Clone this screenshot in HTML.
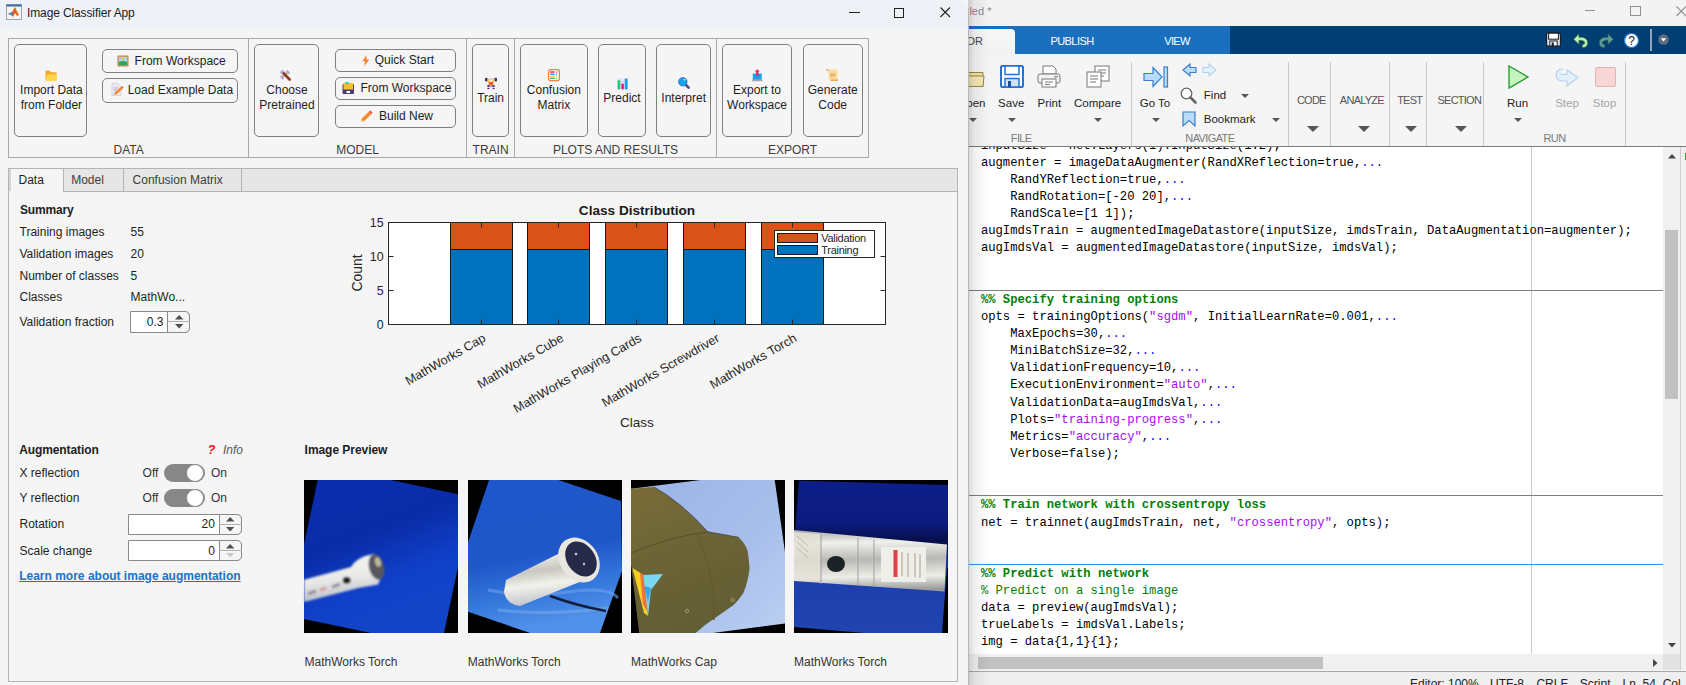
<!DOCTYPE html><html><head><meta charset="utf-8"><style>
html,body{margin:0;padding:0;width:1686px;height:685px;overflow:hidden;background:#f5f5f5;position:relative;}
.t{position:absolute;white-space:pre;}
.r{position:absolute;}
svg.r{overflow:visible;}
</style></head><body>
<div class="r" style="left:968.00px;top:0.00px;width:718.00px;height:26.00px;background:#f3f3f3;"></div>
<div class="t" style="left:969.40px;top:6.19px;font-size:11px;line-height:11px;color:#8a8a8a;font-weight:normal;font-family:'Liberation Sans', sans-serif;">led *</div>
<div class="r" style="left:1585.00px;top:10.00px;width:10.00px;height:1.00px;background:#909090;"></div>
<div class="r" style="left:1630.00px;top:5.50px;width:10.50px;height:10.00px;background:none;border:1px solid #909090;box-sizing:border-box;"></div>
<svg class="r" style="left:1676.00px;top:5.50px;" width="11" height="11" viewBox="0 0 11 11"><path d="M0.5 0.5 L10 10 M10 0.5 L0.5 10" stroke="#909090" stroke-width="1.1" fill="none"/></svg>
<div class="r" style="left:968.00px;top:26.00px;width:262.20px;height:28.20px;background:#1b6fbf;"></div>
<div class="r" style="left:1230.20px;top:26.00px;width:455.80px;height:28.20px;background:#003f73;"></div>
<div class="r" style="left:930.00px;top:29.00px;width:85.00px;height:25.20px;background:linear-gradient(#f7f7f7,#f2f2f2);border-top-right-radius:4px;"></div>
<div class="t" style="left:941.60px;top:35.69px;font-size:11px;line-height:11px;color:#444;font-weight:normal;font-family:'Liberation Sans', sans-serif;">EDITOR</div>
<div class="t" style="left:1050.40px;top:35.69px;font-size:11px;line-height:11px;color:#fff;font-weight:normal;font-family:'Liberation Sans', sans-serif;letter-spacing:-0.55px;">PUBLISH</div>
<div class="t" style="left:1164.30px;top:35.69px;font-size:11px;line-height:11px;color:#fff;font-weight:normal;font-family:'Liberation Sans', sans-serif;letter-spacing:-0.7px;">VIEW</div>
<svg class="r" style="left:1546.00px;top:32.00px;" width="15" height="15" viewBox="0 0 15 15"><path d="M1 1 L13 1 L14.4 2.4 L14.4 14 L1.6 14 L0.6 13 L0.6 1.4 Z" fill="#cfe6f8" stroke="#1a1a1a" stroke-width="1.1"/><rect x="2.6" y="1.2" width="9.8" height="6" fill="#fff" stroke="#1a1a1a" stroke-width="1"/><rect x="3.8" y="9" width="7.4" height="5" fill="#fff" stroke="#1a1a1a" stroke-width="1"/><rect x="5.6" y="10.4" width="2.2" height="3.6" fill="#1a1a1a"/></svg>
<svg class="r" style="left:1573.00px;top:33.00px;" width="16" height="15" viewBox="0 0 16 15"><path d="M0.6 6.2 L6 0.8 L6 4.2 L8.2 4.2 C12.2 4.2 14.8 6.8 14.8 10 C14.8 12.6 12.8 14.6 10.4 14.6 L9.2 14.6 L9.2 11.4 L10.2 11.4 C11 11.4 11.6 10.8 11.6 10 C11.6 8.4 10.2 7.4 8.2 7.4 L6 7.4 L6 11.6 Z" fill="#b9f1b4" stroke="#2c5e2c" stroke-width="0.7"/></svg>
<svg class="r" style="left:1597.50px;top:33.00px;" width="16" height="15" viewBox="0 0 16 15"><path d="M15.4 6.2 L10 0.8 L10 4.2 L7.8 4.2 C3.8 4.2 1.2 6.8 1.2 10 C1.2 12.6 3.2 14.6 5.6 14.6 L6.8 14.6 L6.8 11.4 L5.8 11.4 C5 11.4 4.4 10.8 4.4 10 C4.4 8.4 5.8 7.4 7.8 7.4 L10 7.4 L10 11.6 Z" fill="#5b9c98" stroke="#2c5c5a" stroke-width="0.7"/></svg>
<svg class="r" style="left:1624.00px;top:32.50px;" width="15" height="15" viewBox="0 0 15 15"><circle cx="7.5" cy="7.5" r="7" fill="#fff" stroke="#2a7fd4" stroke-width="1.2"/><text x="7.5" y="11.8" font-size="12" font-weight="normal" text-anchor="middle" font-family="Liberation Sans" fill="#111">?</text></svg>
<div class="r" style="left:1650.40px;top:29.00px;width:1.20px;height:21.50px;background:#9aa4ae;"></div>
<svg class="r" style="left:1658.00px;top:34.00px;" width="11" height="11" viewBox="0 0 11 11"><circle cx="5.5" cy="5.5" r="5.3" fill="#5e6e80"/><path d="M2.8 4.2 L8.2 4.2 L5.5 7.5 Z" fill="#fff"/></svg>
<div class="r" style="left:968.00px;top:54.20px;width:718.00px;height:91.80px;background:#f5f5f5;"></div>
<div class="r" style="left:968.00px;top:145.50px;width:718.00px;height:1.00px;background:#7c7c7c;"></div>
<div class="r" style="left:1131.00px;top:62.00px;width:1.00px;height:83.50px;background:#c9c9c9;"></div>
<div class="r" style="left:1288.00px;top:62.00px;width:1.00px;height:83.50px;background:#c9c9c9;"></div>
<div class="r" style="left:1330.10px;top:62.00px;width:1.00px;height:83.50px;background:#c9c9c9;"></div>
<div class="r" style="left:1389.00px;top:62.00px;width:1.00px;height:83.50px;background:#c9c9c9;"></div>
<div class="r" style="left:1426.00px;top:62.00px;width:1.00px;height:83.50px;background:#c9c9c9;"></div>
<div class="r" style="left:1483.30px;top:62.00px;width:1.00px;height:83.50px;background:#c9c9c9;"></div>
<div class="r" style="left:1625.10px;top:62.00px;width:1.00px;height:83.50px;background:#c9c9c9;"></div>
<svg class="r" style="left:950.00px;top:67.00px;" width="35" height="21" viewBox="0 0 35 21"><path d="M1 3 L11 3 L13 5.5 L33 5.5 L33 19.5 L1 19.5 Z" fill="#f1e4a8" stroke="#9a8740" stroke-width="1"/><path d="M1 19.5 L5 9 L34 9 L33 19.5 Z" fill="#f5e9b6" stroke="#9a8740" stroke-width="1"/></svg>
<div class="t" style="left:385.50px;width:600px;text-align:right;top:98.47px;font-size:11.5px;line-height:11.5px;color:#222;font-weight:normal;font-family:'Liberation Sans', sans-serif;">Open</div>
<svg class="r" style="left:969.00px;top:117.70px;" width="8" height="4" viewBox="0 0 8 4"><path d="M0 0 L8 0 L4.0 4 Z" fill="#555"/></svg>
<svg class="r" style="left:999.50px;top:65.00px;" width="24" height="23" viewBox="0 0 24 23"><rect x="1" y="1" width="22" height="21" rx="1.5" fill="#fff" stroke="#2a70d0" stroke-width="2"/><rect x="5" y="1" width="14" height="8.5" fill="#fff" stroke="#2a70d0" stroke-width="1.5"/><rect x="5" y="13.5" width="14" height="8.5" fill="#cfe3f8" stroke="#2a70d0" stroke-width="1.5"/><rect x="8" y="16" width="3" height="6" fill="#1a4fa0"/></svg>
<div class="t" style="left:711.20px;width:600px;text-align:center;top:98.47px;font-size:11.5px;line-height:11.5px;color:#222;font-weight:normal;font-family:'Liberation Sans', sans-serif;">Save</div>
<svg class="r" style="left:1007.50px;top:117.70px;" width="8" height="4" viewBox="0 0 8 4"><path d="M0 0 L8 0 L4.0 4 Z" fill="#555"/></svg>
<svg class="r" style="left:1037.00px;top:65.00px;" width="24" height="23" viewBox="0 0 24 23"><path d="M6 1 L16 1 L19 4 L19 9 L6 9 Z" fill="#fff" stroke="#777" stroke-width="1"/><rect x="1" y="9" width="22" height="9" rx="2" fill="#f2f2f2" stroke="#777" stroke-width="1"/><rect x="5" y="14" width="14" height="8" fill="#fff" stroke="#777" stroke-width="1"/><path d="M8 17 L16 17 M8 19.5 L13 19.5" stroke="#777" stroke-width="1"/><rect x="17" y="11" width="4" height="1.5" fill="#999"/></svg>
<div class="t" style="left:749.30px;width:600px;text-align:center;top:98.47px;font-size:11.5px;line-height:11.5px;color:#222;font-weight:normal;font-family:'Liberation Sans', sans-serif;">Print</div>
<svg class="r" style="left:1085.50px;top:65.00px;" width="25" height="23" viewBox="0 0 25 23"><rect x="9" y="1" width="14" height="15" fill="#fff" stroke="#777" stroke-width="1"/><path d="M12 5 L20 5 M12 8 L20 8 M12 11 L18 11" stroke="#777" stroke-width="1"/><rect x="1" y="7" width="14" height="15" fill="#fff" stroke="#777" stroke-width="1"/><path d="M4 11 L12 11 M4 14 L12 14 M4 17 L10 17" stroke="#777" stroke-width="1"/></svg>
<div class="t" style="left:797.60px;width:600px;text-align:center;top:98.47px;font-size:11.5px;line-height:11.5px;color:#222;font-weight:normal;font-family:'Liberation Sans', sans-serif;">Compare</div>
<svg class="r" style="left:1093.90px;top:117.70px;" width="8" height="4" viewBox="0 0 8 4"><path d="M0 0 L8 0 L4.0 4 Z" fill="#555"/></svg>
<svg class="r" style="left:1143.00px;top:66.00px;" width="26" height="22" viewBox="0 0 26 22"><path d="M1 7.5 L10 7.5 L10 1.5 L19 11 L10 20.5 L10 14.5 L1 14.5 Z" fill="#b9dcf7" stroke="#3a7fd0" stroke-width="1.2"/><rect x="21" y="1" width="3.5" height="20" fill="#b9dcf7" stroke="#3a7fd0" stroke-width="1.2"/></svg>
<div class="t" style="left:855.00px;width:600px;text-align:center;top:98.47px;font-size:11.5px;line-height:11.5px;color:#222;font-weight:normal;font-family:'Liberation Sans', sans-serif;">Go To</div>
<svg class="r" style="left:1151.80px;top:117.70px;" width="8" height="4" viewBox="0 0 8 4"><path d="M0 0 L8 0 L4.0 4 Z" fill="#555"/></svg>
<svg class="r" style="left:1182.00px;top:62.50px;" width="15" height="14" viewBox="0 0 15 14"><path d="M14 4.5 L8 4.5 L8 1 L1 7 L8 13 L8 9.5 L14 9.5 Z" fill="#b9dcf7" stroke="#3a7fd0" stroke-width="1.2"/></svg>
<svg class="r" style="left:1202.00px;top:62.50px;" width="15" height="14" viewBox="0 0 15 14"><path d="M1 4.5 L7 4.5 L7 1 L14 7 L7 13 L7 9.5 L1 9.5 Z" fill="#e4f0fb" stroke="#b5d0ec" stroke-width="1.1"/></svg>
<svg class="r" style="left:1180.00px;top:86.50px;" width="17" height="17" viewBox="0 0 17 17"><circle cx="6.5" cy="6.5" r="5.3" fill="#fff" stroke="#666" stroke-width="1.3"/><path d="M10.5 10.5 L15.5 15.5" stroke="#666" stroke-width="2.6" stroke-linecap="round"/></svg>
<div class="t" style="left:1203.80px;top:90.47px;font-size:11.5px;line-height:11.5px;color:#222;font-weight:normal;font-family:'Liberation Sans', sans-serif;">Find</div>
<svg class="r" style="left:1241.20px;top:93.90px;" width="8" height="4" viewBox="0 0 8 4"><path d="M0 0 L8 0 L4.0 4 Z" fill="#555"/></svg>
<svg class="r" style="left:1182.00px;top:111.00px;" width="14" height="16" viewBox="0 0 14 16"><path d="M1 1 L13 1 L13 15 L7 9.5 L1 15 Z" fill="#b9dcf7" stroke="#3a7fd0" stroke-width="1.2"/></svg>
<div class="t" style="left:1203.80px;top:114.27px;font-size:11.5px;line-height:11.5px;color:#222;font-weight:normal;font-family:'Liberation Sans', sans-serif;">Bookmark</div>
<svg class="r" style="left:1271.60px;top:117.70px;" width="8" height="4" viewBox="0 0 8 4"><path d="M0 0 L8 0 L4.0 4 Z" fill="#555"/></svg>
<div class="t" style="left:721.20px;width:600px;text-align:center;top:133.09px;font-size:11px;line-height:11px;color:#7a7a7a;font-weight:normal;font-family:'Liberation Sans', sans-serif;letter-spacing:-0.6px;">FILE</div>
<div class="t" style="left:909.90px;width:600px;text-align:center;top:133.09px;font-size:11px;line-height:11px;color:#7a7a7a;font-weight:normal;font-family:'Liberation Sans', sans-serif;letter-spacing:-0.6px;">NAVIGATE</div>
<div class="t" style="left:1254.50px;width:600px;text-align:center;top:133.09px;font-size:11px;line-height:11px;color:#7a7a7a;font-weight:normal;font-family:'Liberation Sans', sans-serif;letter-spacing:-0.6px;">RUN</div>
<div class="t" style="left:1011.30px;width:600px;text-align:center;top:94.59px;font-size:11px;line-height:11px;color:#555;font-weight:normal;font-family:'Liberation Sans', sans-serif;letter-spacing:-0.75px;">CODE</div>
<svg class="r" style="left:1307.00px;top:125.60px;" width="12" height="6" viewBox="0 0 12 6"><path d="M0 0 L12 0 L6.0 6 Z" fill="#555"/></svg>
<div class="t" style="left:1061.90px;width:600px;text-align:center;top:94.59px;font-size:11px;line-height:11px;color:#555;font-weight:normal;font-family:'Liberation Sans', sans-serif;letter-spacing:-0.75px;">ANALYZE</div>
<svg class="r" style="left:1357.60px;top:125.60px;" width="12" height="6" viewBox="0 0 12 6"><path d="M0 0 L12 0 L6.0 6 Z" fill="#555"/></svg>
<div class="t" style="left:1109.70px;width:600px;text-align:center;top:94.59px;font-size:11px;line-height:11px;color:#555;font-weight:normal;font-family:'Liberation Sans', sans-serif;letter-spacing:-0.75px;">TEST</div>
<svg class="r" style="left:1405.40px;top:125.60px;" width="12" height="6" viewBox="0 0 12 6"><path d="M0 0 L12 0 L6.0 6 Z" fill="#555"/></svg>
<div class="t" style="left:1159.30px;width:600px;text-align:center;top:94.59px;font-size:11px;line-height:11px;color:#555;font-weight:normal;font-family:'Liberation Sans', sans-serif;letter-spacing:-0.75px;">SECTION</div>
<svg class="r" style="left:1455.00px;top:125.60px;" width="12" height="6" viewBox="0 0 12 6"><path d="M0 0 L12 0 L6.0 6 Z" fill="#555"/></svg>
<svg class="r" style="left:1507.50px;top:65.00px;" width="21" height="24" viewBox="0 0 21 24"><path d="M1 1 L20 12 L1 23 Z" fill="#c8f2c0" stroke="#1e9a2a" stroke-width="1.3"/></svg>
<div class="t" style="left:1217.50px;width:600px;text-align:center;top:98.47px;font-size:11.5px;line-height:11.5px;color:#222;font-weight:normal;font-family:'Liberation Sans', sans-serif;">Run</div>
<svg class="r" style="left:1514.00px;top:117.70px;" width="8" height="4" viewBox="0 0 8 4"><path d="M0 0 L8 0 L4.0 4 Z" fill="#555"/></svg>
<svg class="r" style="left:1555.00px;top:66.00px;" width="24" height="22" viewBox="0 0 24 22"><path d="M8 3 C3 3 1 6 1 9 C1 13 4 15 8 15 L12 15 L12 20 L23 11.5 L12 4 L12 8.5 L8 8.5 C6.5 8.5 6 8 6 7.5" fill="#e3effa" stroke="#b9d2ee" stroke-width="1.2"/></svg>
<div class="t" style="left:1267.00px;width:600px;text-align:center;top:98.47px;font-size:11.5px;line-height:11.5px;color:#a5a5a5;font-weight:normal;font-family:'Liberation Sans', sans-serif;">Step</div>
<div class="r" style="left:1595.00px;top:67.00px;width:20.50px;height:20.00px;background:#f7d6d6;border:1px solid #e6b3b3;box-sizing:border-box;border-radius:2px;"></div>
<div class="t" style="left:1304.60px;width:600px;text-align:center;top:98.47px;font-size:11.5px;line-height:11.5px;color:#a5a5a5;font-weight:normal;font-family:'Liberation Sans', sans-serif;">Stop</div>
<div class="r" style="left:968.00px;top:146.50px;width:695.30px;height:507.20px;background:#ffffff;"></div>
<div class="r" style="left:1530.90px;top:146.50px;width:1.00px;height:507.20px;background:#c8c8c8;"></div>
<div class="r" style="left:968.00px;top:290.00px;width:695.30px;height:1.00px;background:#7f7f7f;"></div>
<div class="r" style="left:968.00px;top:495.00px;width:695.30px;height:1.00px;background:#7f7f7f;"></div>
<div class="r" style="left:968.00px;top:563.50px;width:695.30px;height:1.00px;background:#3a8ee6;"></div>
<div class="r" style="left:968px;top:146.5px;width:695.3px;height:507.2px;overflow:hidden;font-family:'Liberation Mono', monospace;color:#000;"><div class="t" style="left:12.9px;top:-6.95px;font-size:12.2px;line-height:12.2px;">inputSize = net.Layers(1).InputSize(1:2);</div><div class="t" style="left:12.9px;top:10.18px;font-size:12.2px;line-height:12.2px;">augmenter = imageDataAugmenter(RandXReflection=true,<span style="color:#0e00ff">...</span></div><div class="t" style="left:12.9px;top:27.32px;font-size:12.2px;line-height:12.2px;">    RandYReflection=true,<span style="color:#0e00ff">...</span></div><div class="t" style="left:12.9px;top:44.45px;font-size:12.2px;line-height:12.2px;">    RandRotation=[-20 20],<span style="color:#0e00ff">...</span></div><div class="t" style="left:12.9px;top:61.58px;font-size:12.2px;line-height:12.2px;">    RandScale=[1 1]);</div><div class="t" style="left:12.9px;top:78.72px;font-size:12.2px;line-height:12.2px;">augImdsTrain = augmentedImageDatastore(inputSize, imdsTrain, DataAugmentation=augmenter);</div><div class="t" style="left:12.9px;top:95.85px;font-size:12.2px;line-height:12.2px;">augImdsVal = augmentedImageDatastore(inputSize, imdsVal);</div><div class="t" style="left:12.9px;top:147.25px;font-size:12.2px;line-height:12.2px;"><span style="color:#028009;font-weight:bold">%% Specify training options</span></div><div class="t" style="left:12.9px;top:164.39px;font-size:12.2px;line-height:12.2px;">opts = trainingOptions(<span style="color:#a709f5">"sgdm"</span>, InitialLearnRate=0.001,<span style="color:#0e00ff">...</span></div><div class="t" style="left:12.9px;top:181.52px;font-size:12.2px;line-height:12.2px;">    MaxEpochs=30,<span style="color:#0e00ff">...</span></div><div class="t" style="left:12.9px;top:198.66px;font-size:12.2px;line-height:12.2px;">    MiniBatchSize=32,<span style="color:#0e00ff">...</span></div><div class="t" style="left:12.9px;top:215.79px;font-size:12.2px;line-height:12.2px;">    ValidationFrequency=10,<span style="color:#0e00ff">...</span></div><div class="t" style="left:12.9px;top:232.92px;font-size:12.2px;line-height:12.2px;">    ExecutionEnvironment=<span style="color:#a709f5">"auto"</span>,<span style="color:#0e00ff">...</span></div><div class="t" style="left:12.9px;top:250.06px;font-size:12.2px;line-height:12.2px;">    ValidationData=augImdsVal,<span style="color:#0e00ff">...</span></div><div class="t" style="left:12.9px;top:267.19px;font-size:12.2px;line-height:12.2px;">    Plots=<span style="color:#a709f5">"training-progress"</span>,<span style="color:#0e00ff">...</span></div><div class="t" style="left:12.9px;top:284.33px;font-size:12.2px;line-height:12.2px;">    Metrics=<span style="color:#a709f5">"accuracy"</span>,<span style="color:#0e00ff">...</span></div><div class="t" style="left:12.9px;top:301.46px;font-size:12.2px;line-height:12.2px;">    Verbose=false);</div><div class="t" style="left:12.9px;top:352.86px;font-size:12.2px;line-height:12.2px;"><span style="color:#028009;font-weight:bold">%% Train network with crossentropy loss</span></div><div class="t" style="left:12.9px;top:370.00px;font-size:12.2px;line-height:12.2px;">net = trainnet(augImdsTrain, net, <span style="color:#a709f5">"crossentropy"</span>, opts);</div><div class="t" style="left:12.9px;top:421.40px;font-size:12.2px;line-height:12.2px;"><span style="color:#028009;font-weight:bold">%% Predict with network</span></div><div class="t" style="left:12.9px;top:438.53px;font-size:12.2px;line-height:12.2px;"><span style="color:#028009">% Predict on a single image</span></div><div class="t" style="left:12.9px;top:455.67px;font-size:12.2px;line-height:12.2px;">data = preview(augImdsVal);</div><div class="t" style="left:12.9px;top:472.80px;font-size:12.2px;line-height:12.2px;">trueLabels = imdsVal.Labels;</div><div class="t" style="left:12.9px;top:489.93px;font-size:12.2px;line-height:12.2px;">img = data{1,1}{1};</div><div class="t" style="left:12.9px;top:507.07px;font-size:12.2px;line-height:12.2px;">scores = minibatchpredict(net, img);</div></div>
<div class="r" style="left:1663.30px;top:146.50px;width:16.70px;height:507.20px;background:#f0f0f0;"></div>
<div class="r" style="left:1665.20px;top:230.20px;width:12.80px;height:168.60px;background:#c1c1c1;"></div>
<svg class="r" style="left:1667.50px;top:154.05px;" width="8" height="4.5" viewBox="0 0 8 4.5"><path d="M0 0 L8 0 L4.0 4.5 Z" fill="#555"/></svg>
<svg class="r" style="left:1667.50px;top:154.00px;" width="8" height="4.5" viewBox="0 0 8 4.5"><path d="M0 4.5 L8 4.5 L4 0 Z" fill="#555"/></svg>
<div class="r" style="left:1663.30px;top:150.00px;width:16.70px;height:12.00px;background:#f0f0f0;"></div>
<svg class="r" style="left:1667.50px;top:154.20px;" width="8" height="4.5" viewBox="0 0 8 4.5"><path d="M0 4.5 L8 4.5 L4 0 Z" fill="#444"/></svg>
<svg class="r" style="left:1667.50px;top:642.60px;" width="8" height="4.5" viewBox="0 0 8 4.5"><path d="M0 0 L8 0 L4 4.5 Z" fill="#444"/></svg>
<div class="r" style="left:1680.00px;top:146.50px;width:1.20px;height:524.80px;background:#cfcfcf;"></div>
<div class="r" style="left:1681.20px;top:146.50px;width:4.80px;height:524.80px;background:#f0f0f0;"></div>
<div class="r" style="left:1684.50px;top:153.00px;width:1.50px;height:7.00px;background:#2aa52a;"></div>
<div class="r" style="left:968.00px;top:653.70px;width:695.30px;height:16.10px;background:#f0f0f0;"></div>
<div class="r" style="left:978.00px;top:656.50px;width:345.00px;height:12.00px;background:#c1c1c1;"></div>
<svg class="r" style="left:1653.00px;top:658.50px;" width="4.5" height="8" viewBox="0 0 4.5 8"><path d="M0 0 L4.5 4 L0 8 Z" fill="#444"/></svg>
<div class="r" style="left:1663.30px;top:653.70px;width:16.70px;height:16.30px;background:#e2e2e2;"></div>
<div class="r" style="left:968.00px;top:669.80px;width:718.00px;height:1.50px;background:#f5f5f5;"></div>
<div class="r" style="left:968.00px;top:670.80px;width:718.00px;height:1.00px;background:#a8a8a8;"></div>
<div class="r" style="left:968.00px;top:671.80px;width:718.00px;height:13.20px;background:#efefef;"></div>
<div class="t" style="left:1410.00px;top:678.34px;font-size:12px;line-height:12px;color:#222;font-weight:normal;font-family:'Liberation Sans', sans-serif;">Editor: 100%</div>
<div class="t" style="left:1490.00px;top:678.34px;font-size:12px;line-height:12px;color:#222;font-weight:normal;font-family:'Liberation Sans', sans-serif;">UTF-8</div>
<div class="t" style="left:1536.40px;top:678.34px;font-size:12px;line-height:12px;color:#222;font-weight:normal;font-family:'Liberation Sans', sans-serif;">CRLF</div>
<div class="t" style="left:1579.80px;top:678.34px;font-size:12px;line-height:12px;color:#222;font-weight:normal;font-family:'Liberation Sans', sans-serif;">Script</div>
<div class="t" style="left:1622.60px;top:678.34px;font-size:12px;line-height:12px;color:#222;font-weight:normal;font-family:'Liberation Sans', sans-serif;">Ln  54  Col  1</div>
<div class="r" style="left:968.00px;top:0.00px;width:22.00px;height:685.00px;background:linear-gradient(90deg, rgba(0,0,0,0.16), rgba(0,0,0,0.06) 30%, rgba(0,0,0,0.0));"></div>
<div class="r" style="left:0.00px;top:0.00px;width:968.00px;height:685.00px;background:#f5f5f5;border-top-right-radius:8px;"></div>
<div class="r" style="left:967.60px;top:8.00px;width:1.00px;height:677.00px;background:#b8b8b8;"></div>
<div class="r" style="left:0.00px;top:0.00px;width:968.00px;height:28.00px;background:#eef2f7;border-top-right-radius:8px;"></div>
<svg class="r" style="left:6.00px;top:4.00px;" width="16" height="16" viewBox="0 0 16 16"><rect x="0.5" y="0.5" width="15" height="15" fill="#f2f4f6" stroke="#9aa5b5" stroke-width="1"/><rect x="0.5" y="0.5" width="15" height="2" fill="#3a6ea5"/><path d="M2 10 L6 8 L9 3 L13 11 L11 12 L9 9 L7 13 L5 10 Z" fill="#e85a1a"/><path d="M2 10 L6 8 L7 12 Z" fill="#3a8ad6"/><path d="M9 3 L11 9 L13 11 Z" fill="#f6b73c"/></svg>
<div class="t" style="left:27.00px;top:7.44px;font-size:12px;line-height:12px;color:#1a1a1a;font-weight:normal;font-family:'Liberation Sans', sans-serif;letter-spacing:-0.12px;">Image Classifier App</div>
<div class="r" style="left:849.00px;top:12.20px;width:10.50px;height:1.00px;background:#222;"></div>
<div class="r" style="left:894.00px;top:7.60px;width:10.00px;height:10.00px;background:none;border:1px solid #222;box-sizing:border-box;"></div>
<svg class="r" style="left:939.50px;top:7.40px;" width="10.5" height="10.5" viewBox="0 0 10.5 10.5"><path d="M0.5 0.5 L10 10 M10 0.5 L0.5 10" stroke="#222" stroke-width="1.1" fill="none"/></svg>
<div class="r" style="left:8.00px;top:38.00px;width:861.00px;height:120.00px;background:none;border:1px solid #a9a9a9;box-sizing:border-box;"></div>
<div class="r" style="left:248.00px;top:38.50px;width:1.00px;height:119.00px;background:#a9a9a9;"></div>
<div class="r" style="left:466.00px;top:38.50px;width:1.00px;height:119.00px;background:#a9a9a9;"></div>
<div class="r" style="left:514.00px;top:38.50px;width:1.00px;height:119.00px;background:#a9a9a9;"></div>
<div class="r" style="left:716.00px;top:38.50px;width:1.00px;height:119.00px;background:#a9a9a9;"></div>
<div class="t" style="left:-171.30px;width:600px;text-align:center;top:144.14px;font-size:12px;line-height:12px;color:#3c3c3c;font-weight:normal;font-family:'Liberation Sans', sans-serif;">DATA</div>
<div class="t" style="left:57.60px;width:600px;text-align:center;top:144.14px;font-size:12px;line-height:12px;color:#3c3c3c;font-weight:normal;font-family:'Liberation Sans', sans-serif;">MODEL</div>
<div class="t" style="left:190.60px;width:600px;text-align:center;top:144.14px;font-size:12px;line-height:12px;color:#3c3c3c;font-weight:normal;font-family:'Liberation Sans', sans-serif;">TRAIN</div>
<div class="t" style="left:315.50px;width:600px;text-align:center;top:144.14px;font-size:12px;line-height:12px;color:#3c3c3c;font-weight:normal;font-family:'Liberation Sans', sans-serif;">PLOTS AND RESULTS</div>
<div class="t" style="left:492.50px;width:600px;text-align:center;top:144.14px;font-size:12px;line-height:12px;color:#3c3c3c;font-weight:normal;font-family:'Liberation Sans', sans-serif;">EXPORT</div>
<div class="r" style="left:14.20px;top:44.20px;width:72.80px;height:92.80px;background:#f5f5f5;border:1px solid #808080;box-sizing:border-box;border-radius:5px;"></div>
<svg class="r" style="left:45.00px;top:70.00px;" width="12" height="11" viewBox="0 0 12 11"><path d="M0.5 1.5 Q0.5 0.5 1.5 0.5 L4.5 0.5 L6 2.2 L10.5 2.2 Q11.5 2.2 11.5 3.2 L11.5 10.5 L0.5 10.5 Z" fill="#f9a825"/><path d="M0.5 10.5 L2 4.2 L11.8 4.2 L11.3 10.5 Z" fill="#ffd54a"/></svg>
<div class="t" style="left:-248.60px;width:600px;text-align:center;top:83.84px;font-size:12px;line-height:12px;color:#1e1e1e;font-weight:normal;font-family:'Liberation Sans', sans-serif;">Import Data</div>
<div class="t" style="left:-248.60px;width:600px;text-align:center;top:99.34px;font-size:12px;line-height:12px;color:#1e1e1e;font-weight:normal;font-family:'Liberation Sans', sans-serif;">from Folder</div>
<div class="r" style="left:102.20px;top:49.00px;width:135.70px;height:23.80px;background:#f5f5f5;border:1px solid #808080;box-sizing:border-box;border-radius:5px;"></div>
<svg class="r" style="left:117.00px;top:54.80px;" width="12" height="12" viewBox="0 0 12 12"><rect x="0.5" y="0.5" width="11" height="11" fill="#c98a3c"/><rect x="1.8" y="1.8" width="8.4" height="8.4" fill="#a8d8f0"/><path d="M1.8 10.2 L1.8 7 Q6 5 10.2 7 L10.2 10.2 Z" fill="#2aa070"/><circle cx="6" cy="4" r="1.3" fill="#f8b830"/></svg>
<div class="t" style="left:134.60px;top:54.64px;font-size:12px;line-height:12px;color:#1e1e1e;font-weight:normal;font-family:'Liberation Sans', sans-serif;">From Workspace</div>
<div class="r" style="left:102.20px;top:78.10px;width:135.70px;height:24.50px;background:#f5f5f5;border:1px solid #808080;box-sizing:border-box;border-radius:5px;"></div>
<svg class="r" style="left:110.80px;top:83.40px;" width="12" height="13" viewBox="0 0 12 13"><path d="M1 0.5 L7 0.5 L10 3.5 L10 12.5 L1 12.5 Z" fill="#ece8f2" stroke="#d2cadc" stroke-width="0.8"/><path d="M2.5 5 L7.5 5 M2.5 7 L6 7" stroke="#b8b0c8" stroke-width="1"/><path d="M3 12 L4 9 L10 4 L12 5.5 L6 11 Z" fill="#f58a2a"/><path d="M10 4 L11 3 L12.5 4.5 L11.8 5.5 Z" fill="#f03c6a"/></svg>
<div class="t" style="left:127.70px;top:84.24px;font-size:12px;line-height:12px;color:#1e1e1e;font-weight:normal;font-family:'Liberation Sans', sans-serif;">Load Example Data</div>
<div class="r" style="left:254.40px;top:44.20px;width:65.10px;height:92.80px;background:#f5f5f5;border:1px solid #808080;box-sizing:border-box;border-radius:5px;"></div>
<svg class="r" style="left:279.00px;top:68.80px;" width="12" height="11.5" viewBox="0 0 12 11.5"><path d="M9.8 2.2 L2.2 9.6" stroke="#b2abc8" stroke-width="1.8"/><path d="M8.3 0.8 A2.3 2.3 0 1 0 11.4 3.8 L10.2 3.2 L9 2 Z" fill="#b2abc8"/><path d="M3.6 11 A2.3 2.3 0 1 0 0.6 7.8 L1.8 8.4 L3 9.6 Z" fill="#b2abc8"/><path d="M0.6 3.2 L3.4 0.4 L6.2 3.2 L3.4 6 Z" fill="#b8b2cc"/><path d="M4.8 4.6 L10.6 10.4" stroke="#8e3e1e" stroke-width="2.8" stroke-linecap="round"/></svg>
<div class="t" style="left:-13.00px;width:600px;text-align:center;top:83.84px;font-size:12px;line-height:12px;color:#1e1e1e;font-weight:normal;font-family:'Liberation Sans', sans-serif;">Choose</div>
<div class="t" style="left:-13.00px;width:600px;text-align:center;top:99.34px;font-size:12px;line-height:12px;color:#1e1e1e;font-weight:normal;font-family:'Liberation Sans', sans-serif;">Pretrained</div>
<div class="r" style="left:335.20px;top:49.10px;width:120.80px;height:22.70px;background:#f5f5f5;border:1px solid #808080;box-sizing:border-box;border-radius:5px;"></div>
<svg class="r" style="left:361.80px;top:54.60px;" width="7.6" height="11.2" viewBox="0 0 7.6 11.2"><path d="M4.6 0 L0.4 6.2 L3.2 6.2 L2.2 11.2 L7.2 4.4 L4.3 4.4 Z" fill="#fb7d2a"/></svg>
<div class="t" style="left:374.70px;top:54.04px;font-size:12px;line-height:12px;color:#1e1e1e;font-weight:normal;font-family:'Liberation Sans', sans-serif;">Quick Start</div>
<div class="r" style="left:335.20px;top:77.30px;width:120.80px;height:22.40px;background:#f5f5f5;border:1px solid #808080;box-sizing:border-box;border-radius:5px;"></div>
<svg class="r" style="left:342.00px;top:81.50px;" width="12.5" height="12.5" viewBox="0 0 12.5 12.5"><rect x="0.5" y="2" width="11.5" height="10" rx="1" fill="#4a3f7a"/><rect x="1.5" y="1" width="9.5" height="6.5" fill="#f8c030"/><rect x="3" y="0" width="4" height="2" fill="#5ac8b0"/><rect x="4.5" y="9" width="3.5" height="2" fill="#fff"/></svg>
<div class="t" style="left:360.40px;top:81.74px;font-size:12px;line-height:12px;color:#1e1e1e;font-weight:normal;font-family:'Liberation Sans', sans-serif;">From Workspace</div>
<div class="r" style="left:335.20px;top:105.20px;width:120.80px;height:22.60px;background:#f5f5f5;border:1px solid #808080;box-sizing:border-box;border-radius:5px;"></div>
<svg class="r" style="left:360.00px;top:109.50px;" width="13" height="12.5" viewBox="0 0 13 12.5"><path d="M0.8 12 L1.8 8.5 L9 1.5 L11.5 4 L4.3 11 Z" fill="#f68a2c"/><path d="M9 1.5 L10.3 0.4 L12.6 2.7 L11.5 4 Z" fill="#ef3a6a"/><path d="M0.8 12 L1.5 9.5 L3.3 11.3 Z" fill="#f6d7a0"/></svg>
<div class="t" style="left:379.00px;top:110.14px;font-size:12px;line-height:12px;color:#1e1e1e;font-weight:normal;font-family:'Liberation Sans', sans-serif;">Build New</div>
<div class="r" style="left:472.30px;top:44.20px;width:36.70px;height:92.80px;background:#f5f5f5;border:1px solid #808080;box-sizing:border-box;border-radius:5px;"></div>
<svg class="r" style="left:484.70px;top:76.70px;" width="12" height="12.2" viewBox="0 0 12 12.2"><rect x="0" y="0.8" width="2.6" height="3.6" rx="1" fill="#4a2a78"/><rect x="9.4" y="0.8" width="2.6" height="3.6" rx="1" fill="#4a2a78"/><rect x="2.4" y="1.6" width="7.2" height="1" fill="#b8b8c0"/><path d="M2.6 2.4 L4.2 2.4 L5 4.5 L7 4.5 L7.8 2.4 L9.4 2.4 L8.5 6 L3.5 6 Z" fill="#f6c640"/><path d="M3.6 5 L8.4 5 L8 8.6 L4 8.6 Z" fill="#f85a1a"/><rect x="3.6" y="8.4" width="4.8" height="1.6" fill="#a0a4ac"/><rect x="2.4" y="8" width="2" height="2" fill="#4a2a78"/><rect x="7.6" y="8" width="2" height="2" fill="#4a2a78"/><rect x="2.6" y="9.8" width="1.8" height="1.6" fill="#f6d060"/><rect x="7.6" y="9.8" width="1.8" height="1.6" fill="#f6d060"/><rect x="2.4" y="11" width="2" height="1.2" fill="#4a2a78"/><rect x="7.6" y="11" width="2" height="1.2" fill="#4a2a78"/></svg>
<div class="t" style="left:190.60px;width:600px;text-align:center;top:91.64px;font-size:12px;line-height:12px;color:#1e1e1e;font-weight:normal;font-family:'Liberation Sans', sans-serif;">Train</div>
<div class="r" style="left:520.40px;top:44.20px;width:67.30px;height:92.80px;background:#f5f5f5;border:1px solid #808080;box-sizing:border-box;border-radius:5px;"></div>
<svg class="r" style="left:548.00px;top:68.70px;" width="12" height="12.2" viewBox="0 0 12 12.2"><rect x="0.6" y="0.6" width="10.8" height="11" rx="2.2" fill="#fff" stroke="#f97a42" stroke-width="1.2"/><rect x="2" y="2.3" width="4.8" height="1.5" rx="0.7" fill="#f0208a"/><rect x="2" y="4.4" width="4.8" height="1.5" rx="0.7" fill="#18a4ea"/><rect x="2" y="6.5" width="4.8" height="1.5" rx="0.7" fill="#fcd340"/><rect x="2" y="8.6" width="4.8" height="1.5" rx="0.7" fill="#20cc78"/><rect x="8" y="2.3" width="1.3" height="1.5" rx="0.6" fill="#f0208a"/><rect x="8" y="4.4" width="1.3" height="1.5" rx="0.6" fill="#18a4ea"/><rect x="8" y="6.5" width="1.3" height="1.5" rx="0.6" fill="#fcd340"/><rect x="8" y="8.6" width="1.3" height="1.5" rx="0.6" fill="#20cc78"/></svg>
<div class="t" style="left:253.90px;width:600px;text-align:center;top:83.84px;font-size:12px;line-height:12px;color:#1e1e1e;font-weight:normal;font-family:'Liberation Sans', sans-serif;">Confusion</div>
<div class="t" style="left:253.90px;width:600px;text-align:center;top:99.34px;font-size:12px;line-height:12px;color:#1e1e1e;font-weight:normal;font-family:'Liberation Sans', sans-serif;">Matrix</div>
<div class="r" style="left:598.20px;top:44.20px;width:47.60px;height:92.80px;background:#f5f5f5;border:1px solid #808080;box-sizing:border-box;border-radius:5px;"></div>
<svg class="r" style="left:616.50px;top:77.50px;" width="11" height="11.5" viewBox="0 0 11 11.5"><rect x="0" y="0.3" width="11" height="11" fill="#ece6f4"/><path d="M3.3 0 L3.3 11 M7.8 0 L7.8 11 M0 3.5 L11 3.5" stroke="#d4cce0" stroke-width="0.6"/><rect x="0.6" y="2.3" width="2.6" height="9.2" rx="1" fill="#14d070"/><rect x="4.3" y="5.5" width="2.6" height="6" rx="1" fill="#f01896"/><rect x="7.8" y="0.6" width="2.8" height="10.9" rx="1" fill="#12a2ee"/></svg>
<div class="t" style="left:322.00px;width:600px;text-align:center;top:91.64px;font-size:12px;line-height:12px;color:#1e1e1e;font-weight:normal;font-family:'Liberation Sans', sans-serif;">Predict</div>
<div class="r" style="left:656.40px;top:44.20px;width:54.70px;height:92.80px;background:#f5f5f5;border:1px solid #808080;box-sizing:border-box;border-radius:5px;"></div>
<svg class="r" style="left:677.50px;top:76.50px;" width="11.5" height="11.5" viewBox="0 0 11.5 11.5"><path d="M7.6 7.6 L10.6 10.6" stroke="#5a3f9a" stroke-width="2.6" stroke-linecap="round"/><circle cx="4.8" cy="4.8" r="4.3" fill="#10a6ee" stroke="#5a3f9a" stroke-width="0.6"/><ellipse cx="6.5" cy="2.8" rx="1.1" ry="0.7" fill="#c8ecff"/></svg>
<div class="t" style="left:383.70px;width:600px;text-align:center;top:91.64px;font-size:12px;line-height:12px;color:#1e1e1e;font-weight:normal;font-family:'Liberation Sans', sans-serif;">Interpret</div>
<div class="r" style="left:722.40px;top:44.20px;width:69.50px;height:92.80px;background:#f5f5f5;border:1px solid #808080;box-sizing:border-box;border-radius:5px;"></div>
<svg class="r" style="left:752.00px;top:68.60px;" width="10.5" height="12.2" viewBox="0 0 10.5 12.2"><rect x="0" y="10.2" width="10.5" height="2" rx="0.8" fill="#a6a6b0"/><path d="M0.8 4.6 L9.7 4.6 L9.7 10.6 L0.8 10.6 Z" fill="#12a2ee"/><path d="M5.25 0.2 L7.8 2.6 L6.4 2.6 L6.4 6.8 L4.1 6.8 L4.1 2.6 L2.7 2.6 Z" fill="#f81e5a"/></svg>
<div class="t" style="left:457.00px;width:600px;text-align:center;top:83.84px;font-size:12px;line-height:12px;color:#1e1e1e;font-weight:normal;font-family:'Liberation Sans', sans-serif;">Export to</div>
<div class="t" style="left:457.00px;width:600px;text-align:center;top:99.34px;font-size:12px;line-height:12px;color:#1e1e1e;font-weight:normal;font-family:'Liberation Sans', sans-serif;">Workspace</div>
<div class="r" style="left:802.50px;top:44.20px;width:60.30px;height:92.80px;background:#f5f5f5;border:1px solid #808080;box-sizing:border-box;border-radius:5px;"></div>
<svg class="r" style="left:826.40px;top:68.70px;" width="12.2" height="12.2" viewBox="0 0 12.2 12.2"><path d="M2.5 0.5 L10.5 0.5 Q11.5 0.5 11.5 1.5 L11.5 10 L3.5 10 L3.5 11.5 Q2.5 11.5 2.5 10.5 Z" fill="#ffdc9a"/><ellipse cx="1.5" cy="0.9" rx="1.4" ry="0.7" fill="#e08a3a"/><rect x="4" y="4.5" width="5.5" height="2.8" fill="#e8b070"/><rect x="4" y="8" width="3.5" height="0.8" fill="#f0c890"/><path d="M4.5 10.2 L12 10.2 Q12.5 11.6 11.5 12 L5 12 Q4 11.6 4.5 10.2 Z" fill="#f0a850"/></svg>
<div class="t" style="left:532.70px;width:600px;text-align:center;top:83.84px;font-size:12px;line-height:12px;color:#1e1e1e;font-weight:normal;font-family:'Liberation Sans', sans-serif;">Generate</div>
<div class="t" style="left:532.70px;width:600px;text-align:center;top:99.34px;font-size:12px;line-height:12px;color:#1e1e1e;font-weight:normal;font-family:'Liberation Sans', sans-serif;">Code</div>
<div class="r" style="left:8.20px;top:168.30px;width:949.80px;height:513.70px;background:#f5f5f5;border:1px solid #b4b4b4;box-sizing:border-box;"></div>
<div class="r" style="left:62.50px;top:168.30px;width:895.50px;height:23.70px;background:#e6e6e6;border:1px solid #b4b4b4;box-sizing:border-box;"></div>
<div class="r" style="left:62.50px;top:168.30px;width:61.40px;height:23.70px;background:#e6e6e6;border:1px solid #b4b4b4;box-sizing:border-box;"></div>
<div class="r" style="left:123.40px;top:168.30px;width:118.40px;height:23.70px;background:#e6e6e6;border:1px solid #b4b4b4;box-sizing:border-box;"></div>
<div class="r" style="left:9.20px;top:169.30px;width:1.40px;height:22.20px;background:#d6d6d6;"></div>
<div class="t" style="left:18.50px;top:173.64px;font-size:12px;line-height:12px;color:#1e1e1e;font-weight:normal;font-family:'Liberation Sans', sans-serif;">Data</div>
<div class="t" style="left:71.20px;top:173.64px;font-size:12px;line-height:12px;color:#3c3c3c;font-weight:normal;font-family:'Liberation Sans', sans-serif;">Model</div>
<div class="t" style="left:132.60px;top:173.64px;font-size:12px;line-height:12px;color:#3c3c3c;font-weight:normal;font-family:'Liberation Sans', sans-serif;">Confusion Matrix</div>
<div class="t" style="left:20.00px;top:203.74px;font-size:12px;line-height:12px;color:#212121;font-weight:bold;font-family:'Liberation Sans', sans-serif;letter-spacing:-0.15px;">Summary</div>
<div class="t" style="left:19.50px;top:226.04px;font-size:12px;line-height:12px;color:#1e1e1e;font-weight:normal;font-family:'Liberation Sans', sans-serif;">Training images</div>
<div class="t" style="left:130.60px;top:226.04px;font-size:12px;line-height:12px;color:#1e1e1e;font-weight:normal;font-family:'Liberation Sans', sans-serif;">55</div>
<div class="t" style="left:19.50px;top:248.24px;font-size:12px;line-height:12px;color:#1e1e1e;font-weight:normal;font-family:'Liberation Sans', sans-serif;">Validation images</div>
<div class="t" style="left:130.60px;top:248.24px;font-size:12px;line-height:12px;color:#1e1e1e;font-weight:normal;font-family:'Liberation Sans', sans-serif;">20</div>
<div class="t" style="left:19.50px;top:269.84px;font-size:12px;line-height:12px;color:#1e1e1e;font-weight:normal;font-family:'Liberation Sans', sans-serif;">Number of classes</div>
<div class="t" style="left:130.60px;top:269.84px;font-size:12px;line-height:12px;color:#1e1e1e;font-weight:normal;font-family:'Liberation Sans', sans-serif;">5</div>
<div class="t" style="left:19.50px;top:290.74px;font-size:12px;line-height:12px;color:#1e1e1e;font-weight:normal;font-family:'Liberation Sans', sans-serif;">Classes</div>
<div class="t" style="left:130.60px;top:290.74px;font-size:12px;line-height:12px;color:#1e1e1e;font-weight:normal;font-family:'Liberation Sans', sans-serif;">MathWo...</div>
<div class="t" style="left:19.50px;top:315.64px;font-size:12px;line-height:12px;color:#1e1e1e;font-weight:normal;font-family:'Liberation Sans', sans-serif;">Validation fraction</div>
<div class="r" style="left:130.30px;top:311.30px;width:59.70px;height:21.30px;background:#fff;border:1px solid #8a8a8a;box-sizing:border-box;border-top-right-radius:5px;border-bottom-right-radius:5px;"></div>
<div class="r" style="left:167.10px;top:311.30px;width:22.90px;height:21.30px;background:#f5f5f5;border:1px solid #8a8a8a;box-sizing:border-box;border-top-right-radius:5px;border-bottom-right-radius:5px;"></div>
<div class="r" style="left:167.60px;top:321.45px;width:22.40px;height:1.00px;background:#b0b0b0;"></div>
<svg class="r" style="left:174.60px;top:314.90px;" width="8.4" height="4.6" viewBox="0 0 8.4 4.6"><path d="M0 4.6 L8.4 4.6 L4.2 0 Z" fill="#505050"/></svg>
<svg class="r" style="left:174.60px;top:324.40px;" width="8.4" height="4.6" viewBox="0 0 8.4 4.6"><path d="M0 0 L8.4 0 L4.2 4.6 Z" fill="#505050"/></svg>
<div class="t" style="left:-436.60px;width:600px;text-align:right;top:316.09px;font-size:12px;line-height:12px;color:#1e1e1e;font-weight:normal;font-family:'Liberation Sans', sans-serif;">0.3</div>
<svg class="r" style="left:380.00px;top:215.00px;" width="520" height="120" viewBox="0 0 520 120"><rect x="8.5" y="7.5" width="497.0" height="102.0" fill="#fff"/><rect x="70.5" y="34.5" width="62" height="75.0" fill="#0072bd" stroke="#1a1a1a" stroke-width="1"/><rect x="70.5" y="7.5" width="62" height="27.0" fill="#d95319" stroke="#1a1a1a" stroke-width="1"/><rect x="147.5" y="34.5" width="62" height="75.0" fill="#0072bd" stroke="#1a1a1a" stroke-width="1"/><rect x="147.5" y="7.5" width="62" height="27.0" fill="#d95319" stroke="#1a1a1a" stroke-width="1"/><rect x="225.5" y="34.5" width="62" height="75.0" fill="#0072bd" stroke="#1a1a1a" stroke-width="1"/><rect x="225.5" y="7.5" width="62" height="27.0" fill="#d95319" stroke="#1a1a1a" stroke-width="1"/><rect x="303.5" y="34.5" width="62" height="75.0" fill="#0072bd" stroke="#1a1a1a" stroke-width="1"/><rect x="303.5" y="7.5" width="62" height="27.0" fill="#d95319" stroke="#1a1a1a" stroke-width="1"/><rect x="381.5" y="34.5" width="62" height="75.0" fill="#0072bd" stroke="#1a1a1a" stroke-width="1"/><rect x="381.5" y="7.5" width="62" height="27.0" fill="#d95319" stroke="#1a1a1a" stroke-width="1"/><path d="M101.5 7.5 L101.5 12.5 M101.5 109.5 L101.5 104.5" stroke="#262626" stroke-width="1"/><path d="M178.5 7.5 L178.5 12.5 M178.5 109.5 L178.5 104.5" stroke="#262626" stroke-width="1"/><path d="M256.5 7.5 L256.5 12.5 M256.5 109.5 L256.5 104.5" stroke="#262626" stroke-width="1"/><path d="M334.5 7.5 L334.5 12.5 M334.5 109.5 L334.5 104.5" stroke="#262626" stroke-width="1"/><path d="M412.5 7.5 L412.5 12.5 M412.5 109.5 L412.5 104.5" stroke="#262626" stroke-width="1"/><path d="M8.5 75.5 L13.5 75.5 M505.5 75.5 L500.5 75.5" stroke="#262626" stroke-width="1"/><path d="M8.5 41.5 L13.5 41.5 M505.5 41.5 L500.5 41.5" stroke="#262626" stroke-width="1"/><rect x="8.5" y="7.5" width="497.0" height="102.0" fill="none" stroke="#262626" stroke-width="1"/><rect x="394.5" y="15.5" width="100" height="27" fill="#fff" stroke="#262626" stroke-width="1"/><rect x="397.5" y="18.5" width="40" height="9" fill="#d95319" stroke="#1a1a1a" stroke-width="1"/><rect x="397.5" y="30.5" width="40" height="9" fill="#0072bd" stroke="#1a1a1a" stroke-width="1"/></svg>
<div class="t" style="left:821.30px;top:232.89px;font-size:11px;line-height:11px;color:#262626;font-weight:normal;font-family:'Liberation Sans', sans-serif;letter-spacing:-0.3px;">Validation</div>
<div class="t" style="left:821.30px;top:245.09px;font-size:11px;line-height:11px;color:#262626;font-weight:normal;font-family:'Liberation Sans', sans-serif;letter-spacing:-0.3px;">Training</div>
<div class="t" style="left:337.00px;width:600px;text-align:center;top:204.19px;font-size:13.6px;line-height:13.6px;color:#1a1a1a;font-weight:bold;font-family:'Liberation Sans', sans-serif;">Class Distribution</div>
<div class="t" style="left:-216.40px;width:600px;text-align:right;top:318.50px;font-size:12.4px;line-height:12.4px;color:#262626;font-weight:normal;font-family:'Liberation Sans', sans-serif;">0</div>
<div class="t" style="left:-216.40px;width:600px;text-align:right;top:284.50px;font-size:12.4px;line-height:12.4px;color:#262626;font-weight:normal;font-family:'Liberation Sans', sans-serif;">5</div>
<div class="t" style="left:-216.40px;width:600px;text-align:right;top:250.50px;font-size:12.4px;line-height:12.4px;color:#262626;font-weight:normal;font-family:'Liberation Sans', sans-serif;">10</div>
<div class="t" style="left:-216.40px;width:600px;text-align:right;top:216.50px;font-size:12.4px;line-height:12.4px;color:#262626;font-weight:normal;font-family:'Liberation Sans', sans-serif;">15</div>
<div class="t" style="left:317.3px;top:265.8px;width:80px;text-align:center;font-size:13.9px;line-height:14px;color:#262626;font-family:'Liberation Sans', sans-serif;transform:rotate(-90deg);">Count</div>
<div class="t" style="left:337.00px;width:600px;text-align:center;top:415.97px;font-size:13.5px;line-height:13.5px;color:#262626;font-weight:normal;font-family:'Liberation Sans', sans-serif;">Class</div>
<div class="t" style="left:181.30px;top:331.30px;width:300px;text-align:right;font-size:12.6px;line-height:14px;color:#262626;font-family:'Liberation Sans', sans-serif;transform-origin:100% 0;transform:rotate(-30deg);">MathWorks Cap</div>
<div class="t" style="left:259.10px;top:331.30px;width:300px;text-align:right;font-size:12.6px;line-height:14px;color:#262626;font-family:'Liberation Sans', sans-serif;transform-origin:100% 0;transform:rotate(-30deg);">MathWorks Cube</div>
<div class="t" style="left:336.80px;top:331.30px;width:300px;text-align:right;font-size:12.6px;line-height:14px;color:#262626;font-family:'Liberation Sans', sans-serif;transform-origin:100% 0;transform:rotate(-30deg);">MathWorks Playing Cards</div>
<div class="t" style="left:414.60px;top:331.30px;width:300px;text-align:right;font-size:12.6px;line-height:14px;color:#262626;font-family:'Liberation Sans', sans-serif;transform-origin:100% 0;transform:rotate(-30deg);">MathWorks Screwdriver</div>
<div class="t" style="left:492.40px;top:331.30px;width:300px;text-align:right;font-size:12.6px;line-height:14px;color:#262626;font-family:'Liberation Sans', sans-serif;transform-origin:100% 0;transform:rotate(-30deg);">MathWorks Torch</div>
<div class="t" style="left:19.20px;top:443.64px;font-size:12px;line-height:12px;color:#212121;font-weight:bold;font-family:'Liberation Sans', sans-serif;letter-spacing:-0.1px;">Augmentation</div>
<div class="t" style="left:207.50px;top:443.00px;font-size:13px;line-height:13px;color:#e8191a;font-weight:bold;font-family:'Liberation Sans', sans-serif;font-style:italic;">?</div>
<div class="t" style="left:222.90px;top:443.84px;font-size:12px;line-height:12px;color:#555;font-weight:normal;font-family:'Liberation Sans', sans-serif;font-style:italic;">Info</div>
<div class="t" style="left:19.50px;top:466.74px;font-size:12px;line-height:12px;color:#1e1e1e;font-weight:normal;font-family:'Liberation Sans', sans-serif;">X reflection</div>
<div class="t" style="left:142.60px;top:466.74px;font-size:12px;line-height:12px;color:#333;font-weight:normal;font-family:'Liberation Sans', sans-serif;">Off</div>
<div class="t" style="left:210.90px;top:466.74px;font-size:12px;line-height:12px;color:#333;font-weight:normal;font-family:'Liberation Sans', sans-serif;">On</div>
<div class="r" style="left:164.00px;top:464.00px;width:40.50px;height:18.00px;background:#878787;border-radius:9px;"></div>
<div class="r" style="left:186.20px;top:464.00px;width:18.30px;height:18.00px;background:#fff;border:1px solid #8c8c8c;box-sizing:border-box;border-radius:9px;"></div>
<div class="t" style="left:19.50px;top:491.74px;font-size:12px;line-height:12px;color:#1e1e1e;font-weight:normal;font-family:'Liberation Sans', sans-serif;">Y reflection</div>
<div class="t" style="left:142.60px;top:491.74px;font-size:12px;line-height:12px;color:#333;font-weight:normal;font-family:'Liberation Sans', sans-serif;">Off</div>
<div class="t" style="left:210.90px;top:491.74px;font-size:12px;line-height:12px;color:#333;font-weight:normal;font-family:'Liberation Sans', sans-serif;">On</div>
<div class="r" style="left:164.00px;top:489.00px;width:40.50px;height:18.00px;background:#878787;border-radius:9px;"></div>
<div class="r" style="left:186.20px;top:489.00px;width:18.30px;height:18.00px;background:#fff;border:1px solid #8c8c8c;box-sizing:border-box;border-radius:9px;"></div>
<div class="t" style="left:19.50px;top:517.74px;font-size:12px;line-height:12px;color:#1e1e1e;font-weight:normal;font-family:'Liberation Sans', sans-serif;">Rotation</div>
<div class="r" style="left:128.30px;top:513.50px;width:113.60px;height:21.30px;background:#fff;border:1px solid #8a8a8a;box-sizing:border-box;border-top-right-radius:5px;border-bottom-right-radius:5px;"></div>
<div class="r" style="left:218.50px;top:513.50px;width:23.40px;height:21.30px;background:#f5f5f5;border:1px solid #8a8a8a;box-sizing:border-box;border-top-right-radius:5px;border-bottom-right-radius:5px;"></div>
<div class="r" style="left:219.00px;top:523.65px;width:22.90px;height:1.00px;background:#b0b0b0;"></div>
<svg class="r" style="left:226.25px;top:517.10px;" width="8.4" height="4.6" viewBox="0 0 8.4 4.6"><path d="M0 4.6 L8.4 4.6 L4.2 0 Z" fill="#505050"/></svg>
<svg class="r" style="left:226.25px;top:526.60px;" width="8.4" height="4.6" viewBox="0 0 8.4 4.6"><path d="M0 0 L8.4 0 L4.2 4.6 Z" fill="#505050"/></svg>
<div class="t" style="left:-385.20px;width:600px;text-align:right;top:518.29px;font-size:12px;line-height:12px;color:#1e1e1e;font-weight:normal;font-family:'Liberation Sans', sans-serif;">20</div>
<div class="t" style="left:19.50px;top:544.84px;font-size:12px;line-height:12px;color:#1e1e1e;font-weight:normal;font-family:'Liberation Sans', sans-serif;">Scale change</div>
<div class="r" style="left:128.30px;top:540.20px;width:113.60px;height:21.30px;background:#fff;border:1px solid #8a8a8a;box-sizing:border-box;border-top-right-radius:5px;border-bottom-right-radius:5px;"></div>
<div class="r" style="left:218.50px;top:540.20px;width:23.40px;height:21.30px;background:#f5f5f5;border:1px solid #8a8a8a;box-sizing:border-box;border-top-right-radius:5px;border-bottom-right-radius:5px;"></div>
<div class="r" style="left:219.00px;top:550.35px;width:22.90px;height:1.00px;background:#b0b0b0;"></div>
<svg class="r" style="left:226.25px;top:543.80px;" width="8.4" height="4.6" viewBox="0 0 8.4 4.6"><path d="M0 4.6 L8.4 4.6 L4.2 0 Z" fill="#505050"/></svg>
<svg class="r" style="left:226.25px;top:553.30px;" width="8.4" height="4.6" viewBox="0 0 8.4 4.6"><path d="M0 0 L8.4 0 L4.2 4.6 Z" fill="#c8c8c8"/></svg>
<div class="t" style="left:-385.20px;width:600px;text-align:right;top:544.99px;font-size:12px;line-height:12px;color:#1e1e1e;font-weight:normal;font-family:'Liberation Sans', sans-serif;">0</div>
<div class="t" style="left:19.20px;top:569.64px;font-size:12px;line-height:12px;color:#1a72c8;font-weight:bold;font-family:'Liberation Sans', sans-serif;text-decoration:underline;text-underline-offset:1px;">Learn more about image augmentation</div>
<div class="t" style="left:304.60px;top:443.74px;font-size:12px;line-height:12px;color:#212121;font-weight:bold;font-family:'Liberation Sans', sans-serif;letter-spacing:-0.05px;">Image Preview</div>
<svg class="r" style="left:304.00px;top:480.00px;" width="154" height="153" viewBox="0 0 154 153"><defs><linearGradient id="b1" x1="0" y1="0" x2="0.4" y2="1"><stop offset="0" stop-color="#0b2eb0"/><stop offset="0.45" stop-color="#0a2ca8"/><stop offset="0.75" stop-color="#1040c8"/><stop offset="1" stop-color="#1244c8"/></linearGradient>
<linearGradient id="s1" x1="0" y1="0" x2="0.2" y2="1"><stop offset="0" stop-color="#f8f8f4"/><stop offset="0.6" stop-color="#e8e8e6"/><stop offset="1" stop-color="#b8bcc8"/></linearGradient>
<filter id="f1" x="-10%" y="-10%" width="120%" height="120%"><feGaussianBlur stdDeviation="0.8"/></filter></defs>
<rect width="154" height="153" fill="#000"/>
<polygon points="13.7,0 86.7,0 154,14.3 154,87 140,153 67,153 0,139 0,64.6" fill="url(#b1)"/>
<g filter="url(#f1)">
<path d="M0 99.7 L47 87 Q51 80 61 76 L70 74 L80 90 L74 104.4 L54.4 108 L0 122 Z" fill="url(#s1)"/>
<ellipse cx="72.5" cy="87" rx="7.5" ry="13" transform="rotate(-15 72.5 87)" fill="#55565e"/>
<ellipse cx="74" cy="82" rx="3" ry="5" transform="rotate(-15 74 82)" fill="#c0b89a"/>
<ellipse cx="42.7" cy="100.3" rx="4" ry="3.5" fill="#1a1a22"/>
<path d="M28 107 L36 104 M4 114 L12 111" stroke="#909098" stroke-width="3"/>
<path d="M16 110 L22 108" stroke="#e09090" stroke-width="2.5"/>
</g></svg>
<svg class="r" style="left:468.00px;top:480.00px;" width="154" height="153" viewBox="0 0 154 153"><defs><linearGradient id="b2" x1="0" y1="0" x2="0.2" y2="1"><stop offset="0" stop-color="#1e58cc"/><stop offset="0.55" stop-color="#1f56c8"/><stop offset="0.8" stop-color="#3478dc"/><stop offset="1" stop-color="#5090e8"/></linearGradient>
<linearGradient id="s2" x1="0.3" y1="0" x2="0.5" y2="1"><stop offset="0" stop-color="#f6f6f2"/><stop offset="0.35" stop-color="#c8c8c0"/><stop offset="0.6" stop-color="#f2f2ec"/><stop offset="1" stop-color="#b8bcc4"/></linearGradient>
<filter id="f2" x="-10%" y="-10%" width="120%" height="120%"><feGaussianBlur stdDeviation="0.7"/></filter></defs>
<rect width="154" height="153" fill="#000"/>
<polygon points="21.1,0 90.4,0 153,21.1 154,90.7 132,153 62.2,153 0,131.8 0,62.2" fill="url(#b2)"/>
<g filter="url(#f2)">
<path d="M20 110 Q60 118 100 112 T150 118" stroke="#6aa0ec" stroke-width="3" fill="none" opacity="0.6"/>
<path d="M30 130 Q80 136 140 128" stroke="#7ab0f0" stroke-width="3" fill="none" opacity="0.5"/>
<path d="M82 116 Q110 126 138 131" stroke="#141c3a" stroke-width="2.5" fill="none"/>
<path d="M38 100 L94 72 L124 97 L52 126 Q38 124 36 112 Z" fill="url(#s2)"/>
<ellipse cx="111" cy="80" rx="19" ry="24" transform="rotate(-35 111 80)" fill="#e8e6de"/>
<ellipse cx="113" cy="79" rx="14" ry="19" transform="rotate(-35 113 79)" fill="#262a48"/>
<circle cx="108" cy="74" r="1.3" fill="#c8c8d8"/><circle cx="116" cy="84" r="1.2" fill="#c8c8d8"/>
</g></svg>
<svg class="r" style="left:631.00px;top:480.00px;" width="154" height="153" viewBox="0 0 154 153"><defs><linearGradient id="b3" x1="0" y1="0" x2="1" y2="1"><stop offset="0" stop-color="#9cb4e6"/><stop offset="0.6" stop-color="#a8bfec"/><stop offset="1" stop-color="#bcd0f2"/></linearGradient>
<linearGradient id="c3" x1="0" y1="0" x2="0.3" y2="1"><stop offset="0" stop-color="#7a6c38"/><stop offset="0.5" stop-color="#6c6436"/><stop offset="1" stop-color="#645e34"/></linearGradient>
<filter id="f3" x="-10%" y="-10%" width="120%" height="120%"><feGaussianBlur stdDeviation="0.6"/></filter></defs>
<rect width="154" height="153" fill="url(#b3)"/>
<polygon points="0,0 69.5,0 0,8.8" fill="#000"/>
<polygon points="143.7,0 154,0 154,72" fill="#000"/>
<polygon points="81.8,153 154,153 154,143.4" fill="#000"/>
<g filter="url(#f3)">
<path d="M0 8.8 L23 7 Q50 22 76.9 51.8 L107.6 57.3 Q117 66 117.4 76 L118.6 88.3 Q117 102 112.5 112.8 Q108 120 102.6 125 L74.4 144.7 L64.6 153 L0 153 Z" fill="url(#c3)"/>
<path d="M23 7 Q50 22 76.9 51.8 L107.6 57.3" stroke="#3c3a50" stroke-width="1" fill="none" opacity="0.7"/>
<path d="M0 73 Q40 56 77 52" stroke="#5a5028" stroke-width="1" fill="none"/>
<path d="M66 55 Q86 100 83 140" stroke="#655a2c" stroke-width="1.3" fill="none"/>
<circle cx="56" cy="131" r="1.6" fill="none" stroke="#b8a870" stroke-width="0.8"/>
<circle cx="101.5" cy="120" r="1.6" fill="none" stroke="#b8a870" stroke-width="0.8"/>
</g>
<polygon points="0,84.6 8.2,153 0,153" fill="#000"/>
<path d="M1.5 88 L12.5 95 L17 136 L13 133 Z" fill="#f8d020"/><path d="M9 93 L13 95 L16.5 132 L12 124 Z" fill="#f07040"/>
<path d="M12.5 95 L32 94 L20 110 L17 136 Z" fill="#7ad8f4"/><path d="M13 106 L20 108 L17 122 Z" fill="#40a0e0"/></svg>
<svg class="r" style="left:794.00px;top:480.00px;" width="154" height="153" viewBox="0 0 154 153"><defs><linearGradient id="b4" x1="0" y1="0" x2="0" y2="1"><stop offset="0" stop-color="#0c1e88"/><stop offset="0.28" stop-color="#0c1c80"/><stop offset="0.4" stop-color="#060e48"/><stop offset="0.6" stop-color="#1c3eac"/><stop offset="1" stop-color="#2044b0"/></linearGradient>
<linearGradient id="s4" x1="0" y1="0" x2="0.05" y2="1"><stop offset="0" stop-color="#a4a6a8"/><stop offset="0.22" stop-color="#f0f0ec"/><stop offset="0.5" stop-color="#b8b8b4"/><stop offset="0.78" stop-color="#eeeee8"/><stop offset="1" stop-color="#9a9c9c"/></linearGradient>
<filter id="f4" x="-10%" y="-10%" width="120%" height="120%"><feGaussianBlur stdDeviation="0.7"/></filter></defs>
<rect width="154" height="153" fill="url(#b4)"/>
<polygon points="0,0 154,0 154,5 0,0.6" fill="#000"/><polygon points="0,0 5,0 0,65" fill="#000"/>
<polygon points="0,147 69.5,153 0,153" fill="#000"/><polygon points="153,88 154,88 154,153 148,153" fill="#000"/>
<g filter="url(#f4)">
<path d="M0 50 L153 64.6 L150.5 111.6 L0 101 Z" fill="url(#s4)"/>
<path d="M0 52 L26 54 L26 100 L0 99 Z" fill="#e4e2d6" opacity="0.85"/>
<path d="M3 56 L14 66 M3 62 L14 72 M3 68 L14 78" stroke="#9a9a90" stroke-width="0.8" opacity="0.7"/>
<path d="M27 55 L27 104 M64 58 L64 106 M80 60 L80 107" stroke="#a0a0a0" stroke-width="1"/>
<ellipse cx="42" cy="84" rx="9" ry="8" fill="#1e2226"/>
<rect x="87" y="67" width="45" height="35" fill="#f0eee8"/><rect x="99.5" y="70" width="4" height="27" fill="#e04048"/>
<path d="M108 72 L108 96 M114 73 L114 97 M121 73 L121 97 M126 74 L126 98" stroke="#b0aca0" stroke-width="1.2"/>
</g></svg>
<div class="t" style="left:304.50px;top:655.74px;font-size:12px;line-height:12px;color:#333;font-weight:normal;font-family:'Liberation Sans', sans-serif;">MathWorks Torch</div>
<div class="t" style="left:467.80px;top:655.74px;font-size:12px;line-height:12px;color:#333;font-weight:normal;font-family:'Liberation Sans', sans-serif;">MathWorks Torch</div>
<div class="t" style="left:631.00px;top:655.74px;font-size:12px;line-height:12px;color:#333;font-weight:normal;font-family:'Liberation Sans', sans-serif;">MathWorks Cap</div>
<div class="t" style="left:794.00px;top:655.74px;font-size:12px;line-height:12px;color:#333;font-weight:normal;font-family:'Liberation Sans', sans-serif;">MathWorks Torch</div>
</body></html>
